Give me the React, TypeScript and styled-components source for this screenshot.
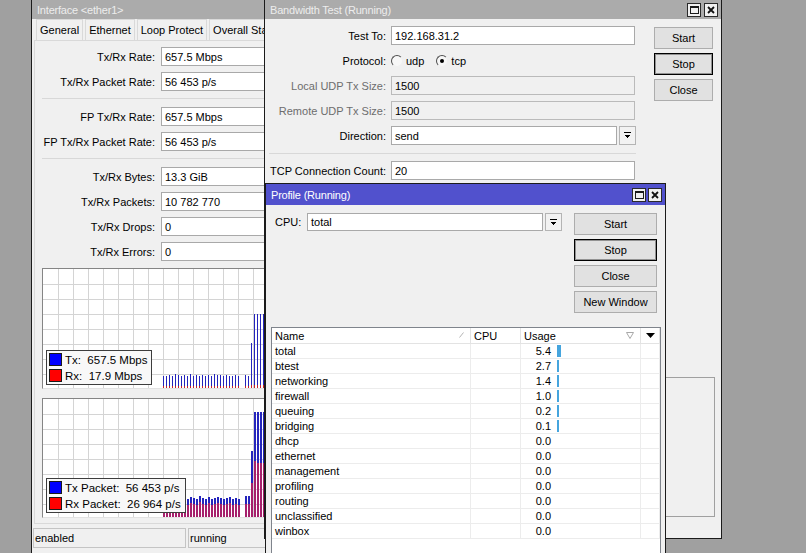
import React from 'react';
import styled, { createGlobalStyle } from 'styled-components';

const GlobalStyle = createGlobalStyle`
  html, body {
    margin: 0;
    padding: 0;
    background: #a0a0a0;
    overflow: hidden;
  }
  body {
    font-family: "Liberation Sans", Arial, sans-serif;
    font-size: 11px;
    color: #000;
  }
  * {
    box-sizing: border-box;
  }
`;

type Bar = { x: number; tx: number; rx: number };

// graph data, in inner graph coordinates (grid step 15px)
const lowTx1 = [107, 107, 106, 107, 105, 106, 107, 106, 107, 105, 107, 106, 107, 106, 107, 106, 107, 105, 106, 106, 107, 106, 107, 107, 106, 107];
const lowTx2 = [100, 99, 100, 98, 99, 100, 97, 99, 100, 98, 99, 100, 97, 99, 100, 98, 100, 99, 98, 99, 100, 99, 98, 100, 99, 100];

const tail = (from: number, tx: number, rx: number): Bar[] => {
  const out: Bar[] = [];
  for (let x = from; x < 258; x += 3) out.push({ x, tx, rx });
  return out;
};

const rateBars: Bar[] = [
  ...lowTx1.map((t, i) => ({ x: 120 + 3 * i, tx: t, rx: 117 })),
  { x: 202, tx: 106, rx: 117 },
  { x: 205, tx: 107, rx: 117 },
  { x: 208, tx: 74, rx: 116 },
  ...tail(211, 45, 116),
];

const packetBars: Bar[] = [
  ...lowTx2.map((t, i) => ({ x: 120 + 3 * i, tx: t, rx: t + 6 })),
  { x: 202, tx: 97, rx: 105 },
  { x: 205, tx: 97, rx: 105 },
  { x: 208, tx: 52, rx: 84 },
  { x: 211, tx: 13, rx: 62 },
  ...tail(214, 13, 64),
];

const cpuRows: [string, number][] = [
  ['total', 5.4],
  ['btest', 2.7],
  ['networking', 1.4],
  ['firewall', 1.0],
  ['queuing', 0.2],
  ['bridging', 0.1],
  ['dhcp', 0],
  ['ethernet', 0],
  ['management', 0],
  ['profiling', 0],
  ['routing', 0],
  ['unclassified', 0],
  ['winbox', 0],
];

const CloseGlyph = () => (
  <svg width={8} height={8} viewBox="0 0 8 8">
    <path d="M1 1L7 7M7 1L1 7" stroke="#111" strokeWidth={1.8} />
  </svg>
);

const DropGlyph = () => (
  <svg width={7} height={7} viewBox="0 0 7 7" shapeRendering="crispEdges">
    <rect x={0} y={0} width={7} height={1} fill="#000" />
    <path d="M0 2.5H7L3.5 6.5Z" fill="#000" />
  </svg>
);

function WindowControls({ gap }: { gap: number }) {
  return (
    <Controls $gap={gap}>
      <CtlBox>
        <MaxGlyph />
      </CtlBox>
      <CtlBox>
        <CloseGlyph />
      </CtlBox>
    </Controls>
  );
}

function GraphCanvas({ width, height, bars, barWidth, rxColor }: { width: number; height: number; bars: Bar[]; barWidth: number; rxColor: string }) {
  const vs: number[] = [];
  const hs: number[] = [];
  for (let x = 15; x < width; x += 15) vs.push(x);
  for (let y = 15; y < height; y += 15) hs.push(y);
  return (
    <svg width={width} height={height} shapeRendering="crispEdges" style={{ display: 'block' }}>
      <rect width={width} height={height} fill="#fff" />
      {vs.map((x) => (
        <line key={'v' + x} x1={x + 0.5} x2={x + 0.5} y1={0} y2={height} stroke="#d4d4d4" />
      ))}
      {hs.map((y) => (
        <line key={'h' + y} x1={0} x2={width} y1={y + 0.5} y2={y + 0.5} stroke="#d4d4d4" />
      ))}
      {bars.map((b) => (
        <g key={b.x}>
          <rect x={b.x} y={b.tx} width={barWidth} height={b.rx - b.tx} fill="#2424bc" />
          <rect x={b.x} y={b.rx} width={barWidth} height={height - b.rx} fill={rxColor} />
        </g>
      ))}
    </svg>
  );
}

function Graph({ height, bars, barWidth, rxColor, legend, legendBottom }: {
  height: number;
  bars: Bar[];
  barWidth: number;
  rxColor: string;
  legend: [string, string][];
  legendBottom: number;
}) {
  return (
    <GraphBox $h={height}>
      <GraphCanvas width={258} height={height - 2} bars={bars} barWidth={barWidth} rxColor={rxColor} />
      <Legend $bottom={legendBottom}>
        {legend.map(([color, text]) => (
          <LegendRow key={text}>
            <Swatch $color={color} />
            <span>{text}</span>
          </LegendRow>
        ))}
      </Legend>
    </GraphBox>
  );
}

function InterfaceField({ label, value }: { label: string; value: string }) {
  return (
    <FieldRow $gap={6}>
      <Label $w={116}>{label}</Label>
      <TextBox $w={140}>{value}</TextBox>
    </FieldRow>
  );
}

function BwField({ label, value, disabled }: { label: string; value: string; disabled?: boolean }) {
  return (
    <FieldRow $gap={5}>
      <Label $w={117} $disabled={disabled}>
        {label}
      </Label>
      <TextBox $w={244} $disabled={disabled}>
        {value}
      </TextBox>
    </FieldRow>
  );
}

export default function App() {
  return (
    <Desktop>
      <GlobalStyle />

      {/* Interface window (inactive, behind) */}
      <Window $x={31} $y={-1} $w={300} $h={570}>
        <TitleBar $h={19}>
          <TitleText>{'Interface <ether1>'}</TitleText>
        </TitleBar>
        <TabStrip>
          <Tab>General</Tab>
          <Tab>Ethernet</Tab>
          <Tab>Loop Protect</Tab>
          <Tab>Overall Stats</Tab>
        </TabStrip>
        <TabPage>
          <FieldGroup>
            <InterfaceField label="Tx/Rx Rate:" value="657.5 Mbps" />
            <InterfaceField label="Tx/Rx Packet Rate:" value="56 453 p/s" />
          </FieldGroup>
          <Separator $indent={7} />
          <FieldGroup>
            <InterfaceField label="FP Tx/Rx Rate:" value="657.5 Mbps" />
            <InterfaceField label="FP Tx/Rx Packet Rate:" value="56 453 p/s" />
          </FieldGroup>
          <Separator $indent={7} />
          <FieldGroup>
            <InterfaceField label="Tx/Rx Bytes:" value="13.3 GiB" />
            <InterfaceField label="Tx/Rx Packets:" value="10 782 770" />
            <InterfaceField label="Tx/Rx Drops:" value="0" />
            <InterfaceField label="Tx/Rx Errors:" value="0" />
          </FieldGroup>
          <GraphStack>
            <Graph
              height={121}
              bars={rateBars}
              barWidth={1}
              rxColor="#c4202c"
              legendBottom={3}
              legend={[
                ['#0000ff', 'Tx:  657.5 Mbps'],
                ['#ff0000', 'Rx:  17.9 Mbps'],
              ]}
            />
            <Graph
              height={120}
              bars={packetBars}
              barWidth={2}
              rxColor="#a6206c"
              legendBottom={4}
              legend={[
                ['#0000ff', 'Tx Packet:  56 453 p/s'],
                ['#ff0000', 'Rx Packet:  26 964 p/s'],
              ]}
            />
          </GraphStack>
        </TabPage>
        <StatusBar>
          <StatusField $w={153}>enabled</StatusField>
          <StatusField $w={110}>running</StatusField>
        </StatusBar>
      </Window>

      {/* Bandwidth test window */}
      <Window $x={264} $y={-1} $w={458} $h={540}>
        <TitleBar $h={19}>
          <TitleText>Bandwidth Test (Running)</TitleText>
          <WindowControls gap={3} />
        </TitleBar>
        <BwBody>
          <BwTop>
            <FormColumn>
              <BwField label="Test To:" value="192.168.31.2" />
              <FieldRow $gap={5}>
                <Label $w={117}>Protocol:</Label>
                <RadioGroup>
                  <RadioOption>
                    <Radio />
                    udp
                  </RadioOption>
                  <RadioOption>
                    <Radio $checked />
                    tcp
                  </RadioOption>
                </RadioGroup>
              </FieldRow>
              <BwField label="Local UDP Tx Size:" value="1500" disabled />
              <BwField label="Remote UDP Tx Size:" value="1500" disabled />
              <FieldRow $gap={5}>
                <Label $w={117}>Direction:</Label>
                <TextBox $w={226}>send</TextBox>
                <DropButton $h={19}>
                  <DropGlyph />
                </DropButton>
              </FieldRow>
              <Separator $indent={0} />
              <BwField label="TCP Connection Count:" value="20" />
            </FormColumn>
            <ButtonColumn $offset={1}>
              <Button $w={59}>Start</Button>
              <Button $w={59} $default>
                Stop
              </Button>
              <Button $w={59}>Close</Button>
            </ButtonColumn>
          </BwTop>
          <StatsPanel />
        </BwBody>
      </Window>

      {/* Profile window (active) */}
      <Window $x={265} $y={183} $w={401} $h={400}>
        <TitleBar $h={21} $active>
          <TitleText>Profile (Running)</TitleText>
          <WindowControls gap={2} />
        </TitleBar>
        <ProfileBody>
          <ProfileTop>
            <FieldRow $gap={5}>
              <Label $w={27} $left>
                CPU:
              </Label>
              <TextBox $w={236} $h={18}>
                total
              </TextBox>
              <DropButton $h={18}>
                <DropGlyph />
              </DropButton>
            </FieldRow>
            <ButtonColumn $offset={0}>
              <Button $w={83}>Start</Button>
              <Button $w={83} $default>
                Stop
              </Button>
              <Button $w={83}>Close</Button>
              <Button $w={83}>New Window</Button>
            </ButtonColumn>
          </ProfileTop>
          <TableBox>
            <HeaderRow>
              <HeadCell>
                Name
                <SortMark>
                  <svg width={5} height={6} viewBox="0 0 5 6">
                    <path d="M0.5 5.5L4.5 0.5" stroke="#b5b5b5" strokeWidth={1} />
                  </svg>
                </SortMark>
              </HeadCell>
              <HeadCell>CPU</HeadCell>
              <HeadCell>
                Usage
                <SortMark>
                  <svg width={8} height={7} viewBox="0 0 8 7">
                    <path d="M0.5 0.5H7.5L4 6.5Z" fill="none" stroke="#a8a8a8" strokeWidth={1} />
                  </svg>
                </SortMark>
              </HeadCell>
              <HeadCell $center>
                <svg width={9} height={5} viewBox="0 0 9 5">
                  <path d="M0 0H9L4.5 5Z" fill="#000" />
                </svg>
              </HeadCell>
            </HeaderRow>
            {cpuRows.map(([name, usage]) => (
              <DataRow key={name}>
                <Cell>{name}</Cell>
                <Cell />
                <Cell>
                  <UsageValue>{usage.toFixed(1)}</UsageValue>
                  {usage > 0 && <UsageBar style={{ width: Math.max(2, Math.round(usage / 1.4)) }} />}
                </Cell>
                <Cell />
              </DataRow>
            ))}
          </TableBox>
        </ProfileBody>
      </Window>
    </Desktop>
  );
}

const Desktop = styled.div`
  position: relative;
  width: 806px;
  height: 553px;
  overflow: hidden;
  background: #a0a0a0;
`;

const Window = styled.div<{ $x: number; $y: number; $w: number; $h: number }>`
  position: absolute;
  left: ${(p) => p.$x}px;
  top: ${(p) => p.$y}px;
  width: ${(p) => p.$w}px;
  height: ${(p) => p.$h}px;
  display: flex;
  flex-direction: column;
  background: #f0f0f0;
  border: 1px solid #1b1b1b;
  overflow: hidden;
`;

const TitleBar = styled.div<{ $h: number; $active?: boolean }>`
  flex: none;
  height: ${(p) => p.$h}px;
  display: flex;
  align-items: center;
  padding: 0 3px 0 5px;
  background: ${(p) => (p.$active ? '#5151cd' : '#ababab')};
  color: ${(p) => (p.$active ? '#ffffff' : '#ededed')};
`;

const TitleText = styled.span`
  white-space: nowrap;
  letter-spacing: -0.2px;
`;

const Controls = styled.div<{ $gap: number }>`
  margin-left: auto;
  display: flex;
  gap: ${(p) => p.$gap}px;
`;

const CtlBox = styled.div`
  width: 14px;
  height: 14px;
  border: 1px solid #2a2a2a;
  background: #f0f0f0;
  display: flex;
  align-items: center;
  justify-content: center;
`;

const MaxGlyph = styled.div`
  width: 9px;
  height: 8px;
  border: 1px solid #1a1a1a;
  border-top-width: 2px;
`;

const TabStrip = styled.div`
  flex: none;
  height: 21px;
  display: flex;
  gap: 2px;
  padding-left: 4px;
`;

const Tab = styled.div`
  display: flex;
  align-items: center;
  padding: 0 3px;
  border: 1px solid #d9d9d9;
  border-bottom: none;
  background: #f0f0f0;
  white-space: nowrap;
`;

const TabPage = styled.div`
  flex: none;
  height: 484px;
  margin-left: 2px;
  padding-top: 6px;
  border: 1px solid #d9d9d9;
  display: flex;
  flex-direction: column;
`;

const FieldGroup = styled.div`
  display: flex;
  flex-direction: column;
  gap: 6px;
  padding-left: 4px;
`;

const FieldRow = styled.div<{ $gap: number }>`
  display: flex;
  align-items: center;
  gap: ${(p) => p.$gap}px;
`;

const Label = styled.span<{ $w: number; $disabled?: boolean; $left?: boolean }>`
  flex: none;
  width: ${(p) => p.$w}px;
  text-align: ${(p) => (p.$left ? 'left' : 'right')};
  white-space: nowrap;
  color: ${(p) => (p.$disabled ? '#6d6d6d' : '#000')};
`;

const TextBox = styled.div<{ $w: number; $h?: number; $disabled?: boolean }>`
  flex: none;
  width: ${(p) => p.$w}px;
  height: ${(p) => p.$h ?? 19}px;
  padding-left: 3px;
  display: flex;
  align-items: center;
  white-space: nowrap;
  overflow: hidden;
  border: 1px solid ${(p) => (p.$disabled ? '#bababa' : '#a9a9a9')};
  background: ${(p) => (p.$disabled ? '#f0f0f0' : '#ffffff')};
`;

const DropButton = styled.div<{ $h: number }>`
  flex: none;
  width: 17px;
  height: ${(p) => p.$h}px;
  margin-left: -3px;
  border: 1px solid #b4b4b4;
  background: #f2f2f2;
  display: flex;
  align-items: center;
  justify-content: center;
`;

const Separator = styled.div<{ $indent: number }>`
  flex: none;
  height: 1px;
  margin: 7px 0 8px ${(p) => p.$indent}px;
  background: #d8d8d8;
`;

const GraphStack = styled.div`
  display: flex;
  flex-direction: column;
  gap: 9px;
  margin: 7px 0 0 7px;
`;

const GraphBox = styled.div<{ $h: number }>`
  position: relative;
  flex: none;
  width: 260px;
  height: ${(p) => p.$h}px;
  border: 1px solid;
  border-color: #858585 #e2e2e2 #e2e2e2 #858585;
  background: #fff;
`;

const Legend = styled.div<{ $bottom: number }>`
  position: absolute;
  left: 3px;
  bottom: ${(p) => p.$bottom}px;
  display: flex;
  flex-direction: column;
  gap: 3px;
  padding: 2px 4px 2px 2px;
  border: 1px solid #3d3d3d;
  background: #f8f8f8;
`;

const LegendRow = styled.div`
  display: flex;
  align-items: center;
  gap: 3px;
  height: 13px;
  white-space: pre;
  font-size: 11.5px;
`;

const Swatch = styled.span<{ $color: string }>`
  width: 13px;
  height: 13px;
  border: 1px solid #1a1a1a;
  background: ${(p) => p.$color};
`;

const StatusBar = styled.div`
  flex: none;
  display: flex;
  gap: 2px;
  padding: 4px 0 0 1px;
`;

const StatusField = styled.div<{ $w: number }>`
  width: ${(p) => p.$w}px;
  height: 20px;
  padding-left: 1px;
  display: flex;
  align-items: center;
  border: 1px solid #c4c4c4;
`;

const BwBody = styled.div`
  flex: 1;
  display: flex;
  flex-direction: column;
  padding: 7px 5px 21px 4px;
`;

const BwTop = styled.div`
  display: flex;
  align-items: flex-start;
  gap: 18px;
`;

const FormColumn = styled.div`
  display: flex;
  flex-direction: column;
  gap: 6px;

  & > ${Separator} {
    margin-top: 2px;
    margin-bottom: 1px;
  }
`;

const RadioGroup = styled.div`
  display: flex;
  align-items: center;
  gap: 12px;
  height: 19px;
`;

const RadioOption = styled.label`
  display: flex;
  align-items: center;
  gap: 3px;
`;

const Radio = styled.span<{ $checked?: boolean }>`
  position: relative;
  width: 12px;
  height: 12px;
  border-radius: 50%;
  border: 1px solid;
  border-color: #4e4e4e #f0f0f0 #f0f0f0 #4e4e4e;
  background: #f7f7f7;

  &::after {
    content: '';
    display: ${(p) => (p.$checked ? 'block' : 'none')};
    position: absolute;
    left: 3px;
    top: 3px;
    width: 4px;
    height: 4px;
    border-radius: 50%;
    background: #000;
  }
`;

const ButtonColumn = styled.div<{ $offset: number }>`
  flex: none;
  display: flex;
  flex-direction: column;
  gap: 4px;
  margin-top: ${(p) => p.$offset}px;
`;

const Button = styled.div<{ $w: number; $default?: boolean }>`
  width: ${(p) => p.$w}px;
  height: 22px;
  display: flex;
  align-items: center;
  justify-content: center;
  background: #e1e1e1;
  border: 1px solid ${(p) => (p.$default ? '#000' : '#adadad')};
  box-shadow: ${(p) => (p.$default ? 'inset 0 0 0 1px rgba(0,0,0,0.35)' : 'none')};
  white-space: nowrap;
`;

// lower panel of the test window; only its bottom-right corner shows beside the profile window
const StatsPanel = styled.div`
  flex: none;
  height: 140px;
  margin: auto 1px 0 0;
  border: 1px solid #a0a0a0;
`;

const ProfileBody = styled.div`
  flex: 1;
  display: flex;
  flex-direction: column;
  padding: 8px 3px 0 5px;
`;

const ProfileTop = styled.div`
  display: flex;
  align-items: flex-start;
  justify-content: space-between;
  padding: 0 5px 0 4px;
`;

const TableBox = styled.div`
  flex: 1;
  width: 390px;
  margin-top: 14px;
  border: 1px solid #7f848c;
  background: #fff;
`;

const HeaderRow = styled.div`
  display: grid;
  grid-template-columns: 199px 50px 120px 19px;
  height: 16px;
`;

const DataRow = styled.div`
  display: grid;
  grid-template-columns: 199px 50px 120px 19px;
  height: 15px;
`;

const HeadCell = styled.div<{ $center?: boolean }>`
  position: relative;
  display: flex;
  align-items: center;
  justify-content: ${(p) => (p.$center ? 'center' : 'flex-start')};
  padding-left: ${(p) => (p.$center ? 0 : 3)}px;
  border-right: 1px solid #e3e3e3;
  border-bottom: 1px solid #e3e3e3;
  white-space: nowrap;
`;

const SortMark = styled.span`
  position: absolute;
  right: 6px;
  top: 4px;
  display: flex;
`;

const Cell = styled.div`
  display: flex;
  align-items: center;
  padding-left: 3px;
  border-right: 1px solid #ececec;
  border-bottom: 1px solid #ececec;
  white-space: nowrap;
  overflow: hidden;
`;

const UsageValue = styled.span`
  width: 27px;
  text-align: right;
`;

const UsageBar = styled.span`
  height: 12px;
  margin-left: 6px;
  background: #45a5de;
`;
